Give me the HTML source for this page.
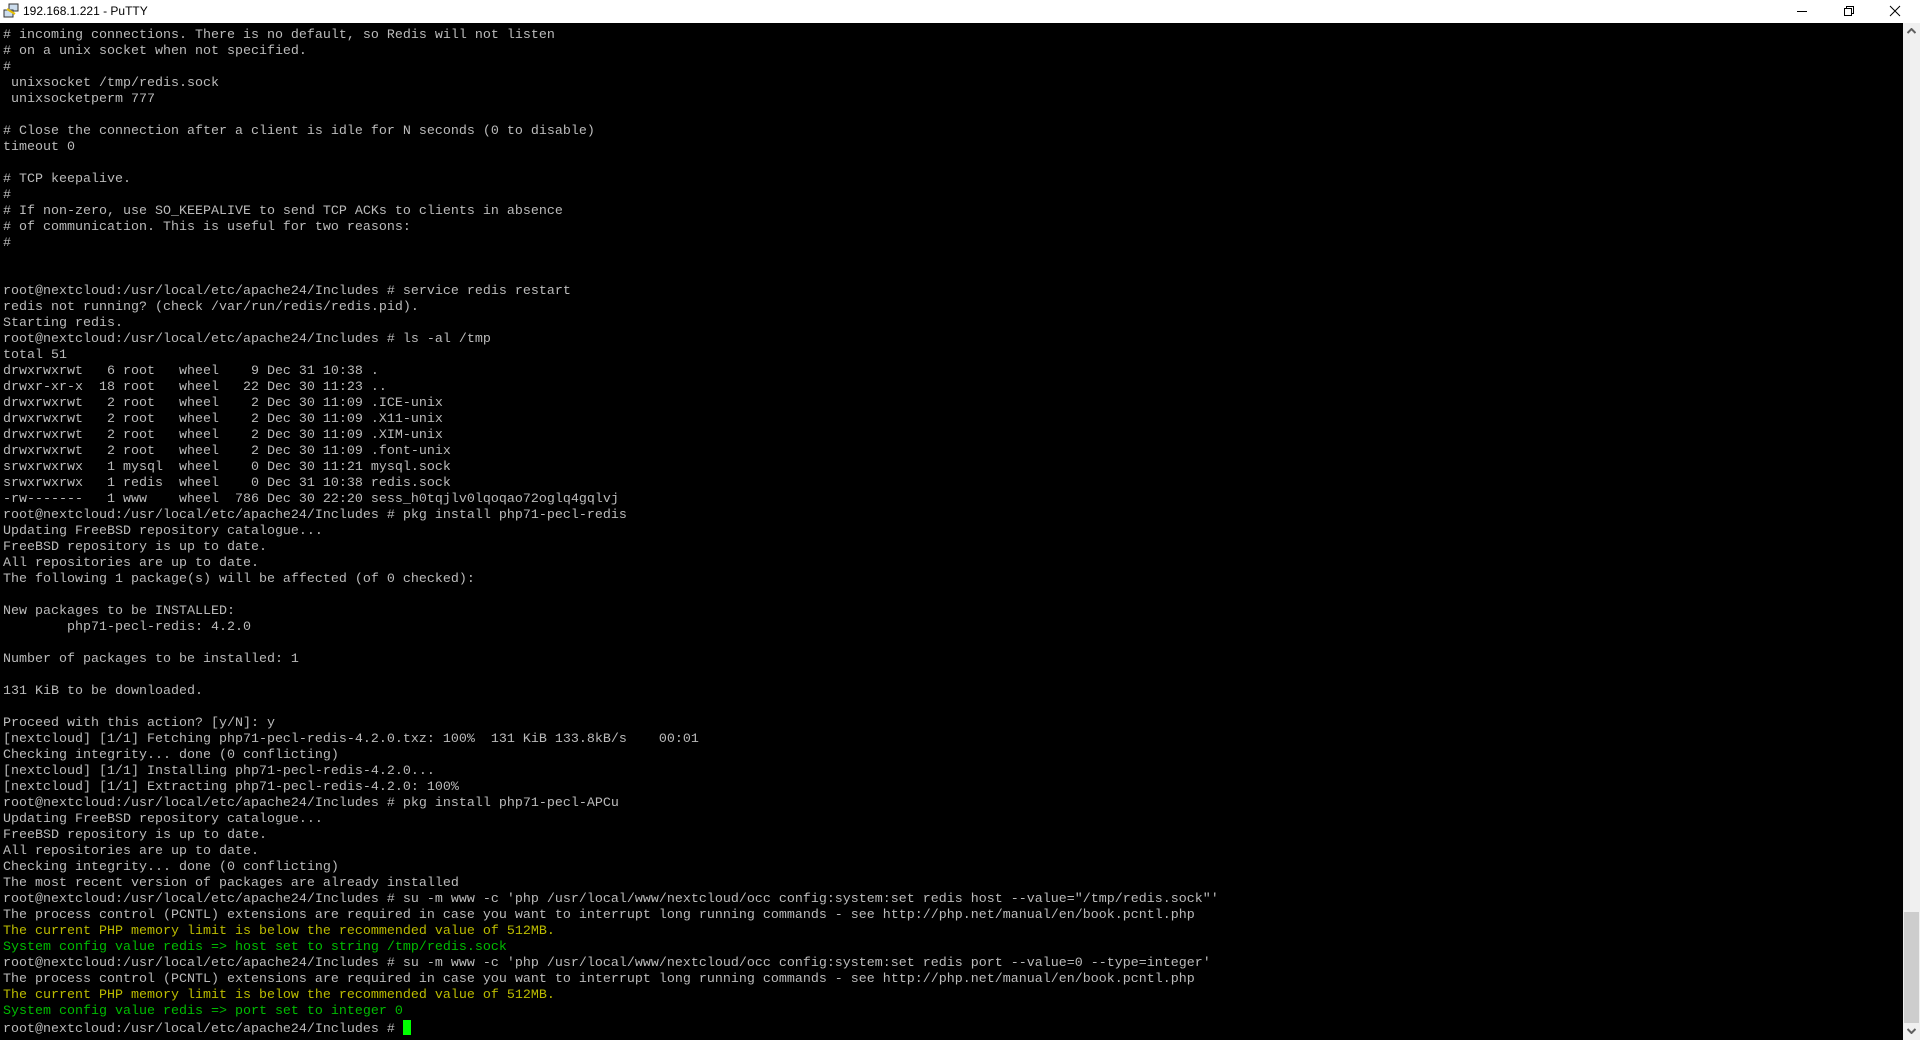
<!DOCTYPE html>
<html><head><meta charset="utf-8"><style>
html,body{margin:0;padding:0;width:1920px;height:1040px;overflow:hidden;background:#000;}
#title{position:absolute;left:0;top:0;width:1920px;height:23px;background:#fff;font-family:"Liberation Sans",sans-serif;font-size:12px;color:#000;}
#title .t{position:absolute;left:23px;top:4px;}
#term{position:absolute;left:0;top:23px;width:1903px;height:1017px;background:#000;}
pre{margin:0;padding:5px 0 0 3px;font-family:"Liberation Mono","Courier New",monospace;font-size:13.33px;line-height:16px;color:#bbb;white-space:pre;}
.y{color:#bbbb00}.g{color:#00bb00}
.cur{display:inline-block;width:8px;height:15px;background:#00ff00;vertical-align:-3px;}
#sb{position:absolute;left:1903px;top:23px;width:17px;height:1017px;background:#f0f0f0;}
#thumb{position:absolute;left:1px;top:889px;width:15px;height:111px;background:#cdcdcd;}
</style></head><body>
<div id="title">
<svg style="position:absolute;left:3px;top:3px" width="16" height="16" viewBox="0 0 16 16"><rect x="6" y="1" width="9" height="7" fill="#cde" stroke="#333"/><rect x="1" y="7" width="9" height="7" fill="#cde" stroke="#333"/><path d="M4 6 L12 11" stroke="#e8c000" stroke-width="2"/></svg>
<span class="t">192.168.1.221 - PuTTY</span>
<svg style="position:absolute;left:1795px;top:4px" width="14" height="14"><path d="M2 7.5H12" stroke="#000" stroke-width="1"/></svg>
<svg style="position:absolute;left:1842px;top:4px" width="14" height="14"><rect x="2.5" y="4.5" width="7" height="7" fill="none" stroke="#000"/><path d="M4.5 4.5V2.5H11.5V9.5H9.5" fill="none" stroke="#000"/></svg>
<svg style="position:absolute;left:1888px;top:4px" width="14" height="14"><path d="M2 2L12 12M12 2L2 12" stroke="#000" stroke-width="1"/></svg>
</div>
<div id="term"><pre># incoming connections. There is no default, so Redis will not listen
# on a unix socket when not specified.
#
 unixsocket /tmp/redis.sock
 unixsocketperm 777

# Close the connection after a client is idle for N seconds (0 to disable)
timeout 0

# TCP keepalive.
#
# If non-zero, use SO_KEEPALIVE to send TCP ACKs to clients in absence
# of communication. This is useful for two reasons:
#


root@nextcloud:/usr/local/etc/apache24/Includes # service redis restart
redis not running? (check /var/run/redis/redis.pid).
Starting redis.
root@nextcloud:/usr/local/etc/apache24/Includes # ls -al /tmp
total 51
drwxrwxrwt   6 root   wheel    9 Dec 31 10:38 .
drwxr-xr-x  18 root   wheel   22 Dec 30 11:23 ..
drwxrwxrwt   2 root   wheel    2 Dec 30 11:09 .ICE-unix
drwxrwxrwt   2 root   wheel    2 Dec 30 11:09 .X11-unix
drwxrwxrwt   2 root   wheel    2 Dec 30 11:09 .XIM-unix
drwxrwxrwt   2 root   wheel    2 Dec 30 11:09 .font-unix
srwxrwxrwx   1 mysql  wheel    0 Dec 30 11:21 mysql.sock
srwxrwxrwx   1 redis  wheel    0 Dec 31 10:38 redis.sock
-rw-------   1 www    wheel  786 Dec 30 22:20 sess_h0tqjlv0lqoqao72oglq4gqlvj
root@nextcloud:/usr/local/etc/apache24/Includes # pkg install php71-pecl-redis
Updating FreeBSD repository catalogue...
FreeBSD repository is up to date.
All repositories are up to date.
The following 1 package(s) will be affected (of 0 checked):

New packages to be INSTALLED:
        php71-pecl-redis: 4.2.0

Number of packages to be installed: 1

131 KiB to be downloaded.

Proceed with this action? [y/N]: y
[nextcloud] [1/1] Fetching php71-pecl-redis-4.2.0.txz: 100%  131 KiB 133.8kB/s    00:01
Checking integrity... done (0 conflicting)
[nextcloud] [1/1] Installing php71-pecl-redis-4.2.0...
[nextcloud] [1/1] Extracting php71-pecl-redis-4.2.0: 100%
root@nextcloud:/usr/local/etc/apache24/Includes # pkg install php71-pecl-APCu
Updating FreeBSD repository catalogue...
FreeBSD repository is up to date.
All repositories are up to date.
Checking integrity... done (0 conflicting)
The most recent version of packages are already installed
root@nextcloud:/usr/local/etc/apache24/Includes # su -m www -c 'php /usr/local/www/nextcloud/occ config:system:set redis host --value="/tmp/redis.sock"'
The process control (PCNTL) extensions are required in case you want to interrupt long running commands - see http://php.net/manual/en/book.pcntl.php
<span class="y">The current PHP memory limit is below the recommended value of 512MB.</span>
<span class="g">System config value redis =&gt; host set to string /tmp/redis.sock</span>
root@nextcloud:/usr/local/etc/apache24/Includes # su -m www -c 'php /usr/local/www/nextcloud/occ config:system:set redis port --value=0 --type=integer'
The process control (PCNTL) extensions are required in case you want to interrupt long running commands - see http://php.net/manual/en/book.pcntl.php
<span class="y">The current PHP memory limit is below the recommended value of 512MB.</span>
<span class="g">System config value redis =&gt; port set to integer 0</span>
root@nextcloud:/usr/local/etc/apache24/Includes # <span class="cur"></span></pre></div>
<div id="sb">
<svg style="position:absolute;left:4px;top:5px" width="9" height="6"><path d="M0.5 5L4.5 1L8.5 5" fill="none" stroke="#606060" stroke-width="2"/></svg>
<div id="thumb"></div>
<svg style="position:absolute;left:4px;top:1005px" width="9" height="6"><path d="M0.5 1L4.5 5L8.5 1" fill="none" stroke="#606060" stroke-width="2"/></svg>
</div>
</body></html>
